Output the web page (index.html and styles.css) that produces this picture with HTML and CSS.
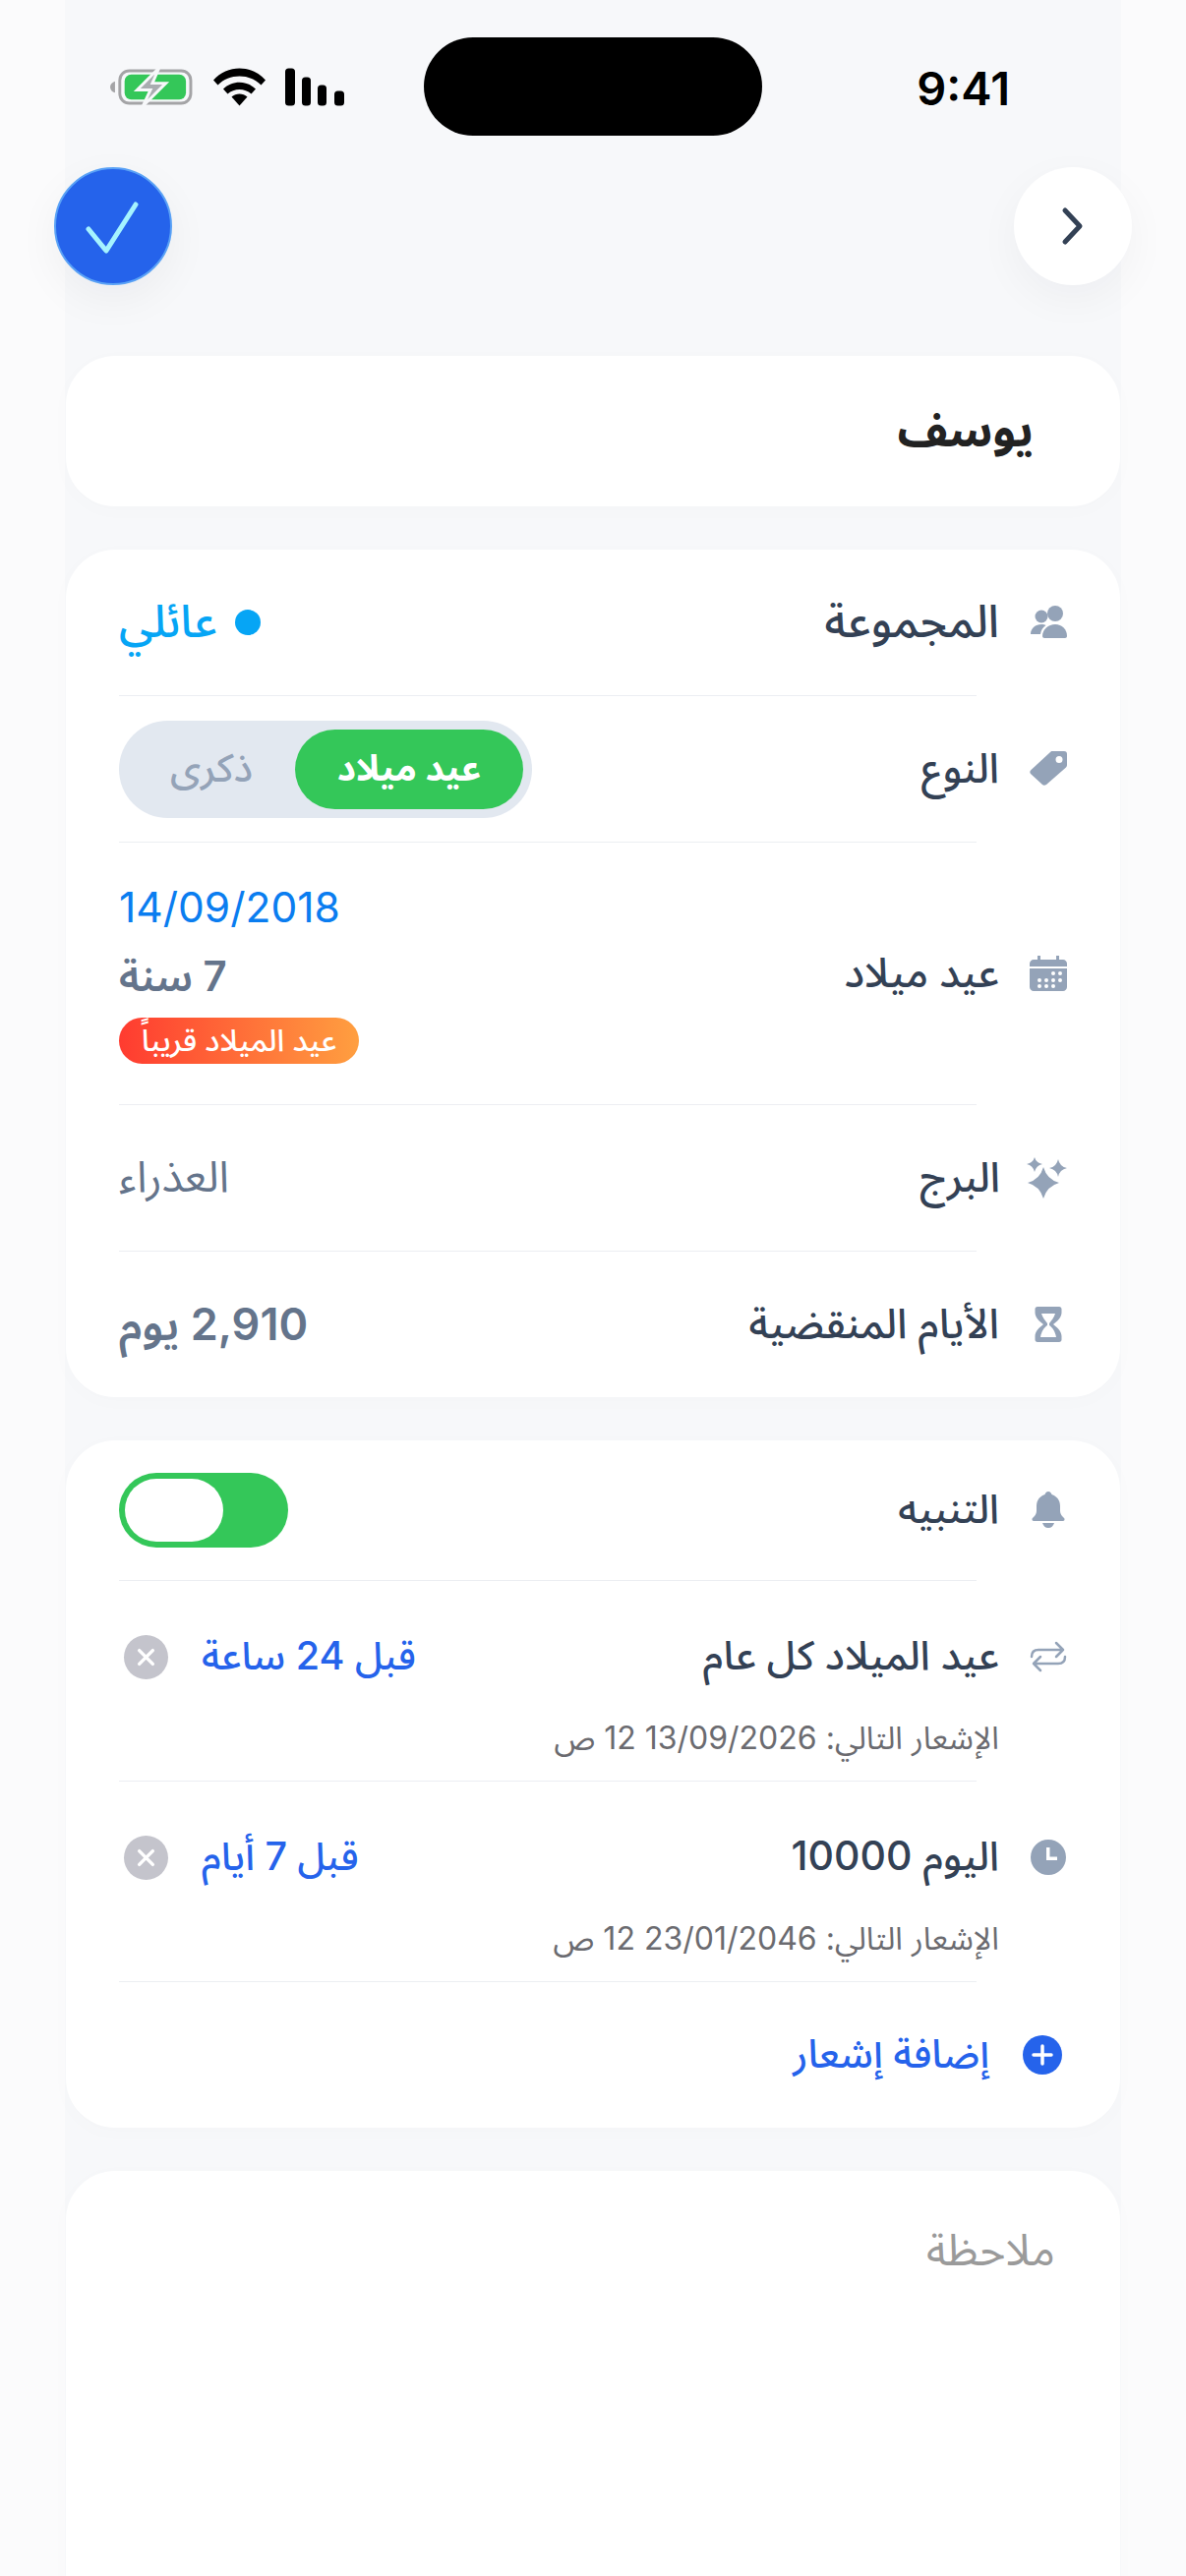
FILE: index.html
```html
<!DOCTYPE html>
<html lang="ar" dir="rtl">
<head>
<meta charset="utf-8">
<title>يوسف</title>
<link rel="stylesheet" href="styles.css">
</head>
<body>
<main class="panel">
  <div class="status">
    <span class="time">9:41</span>
    <div class="status-icons">
      <svg class="ic-signal" viewBox="0 0 60 38"><rect x="0" y="0" width="10" height="38" rx="3.500"/><rect x="17" y="9" width="9" height="29" rx="3.500"/><rect x="33" y="17" width="9" height="21" rx="3.500"/><rect x="50" y="23" width="10" height="15" rx="3.500"/></svg>
      <svg class="ic-wifi" viewBox="0 0 53 38"><path d="M0 12C14-4 39-4 53 12l-4.500 5C37 5 16 5 4.500 17z"/><path d="M10 21c9-9 24-9 33 0l-4.500 5c-6.500-6-17.500-6-24 0z"/><path d="M18.500 29c4.500-4 11.500-4 16 0L26.500 38z"/></svg>
      <svg class="ic-batt" viewBox="0 0 87 40"><path d="M6 14v12c-3-1-5-3-5-6s2-5 5-6z" fill="#a4a4a6"/><rect x="11" y="3" width="74" height="34" rx="10" fill="none" stroke="#a4a4a6" stroke-width="3"/><rect x="16" y="7" width="64" height="26" rx="7" fill="#34c759"/><path d="M52 0L29 23h14l-8 17 24-24H45z" fill="#a9acb0" stroke="#f7f8fa" stroke-width="3"/></svg>
    </div>
    <span class="island"></span>
  </div>

  <header class="topbar">
    <button class="round round-white" type="button" aria-label="رجوع">
      <svg viewBox="0 0 24 40" class="chev"><path d="M4 4l15 16L4 36"/></svg>
    </button>
    <button class="round round-blue" type="button" aria-label="حفظ">
      <svg viewBox="0 0 60 60" class="check"><path d="M5 33l18 22L53 8"/></svg>
    </button>
  </header>

  <section class="card card-name"><h1 class="name">يوسف</h1></section>

  <section class="card">
    <div class="row">
      <div class="key">
        <svg class="icon" viewBox="0 0 38 38"><circle cx="12" cy="13" r="6.500"/><circle cx="26" cy="10" r="8"/><path d="M1 31c0-6 5-10 11-10 2 0 3 .3 4.500 1-3 2-5 5-5.500 9z"/><path d="M13 33c0-7 6-12 13-12s12 5 12 12c0 1-1 2-2 2H15c-1 0-2-1-2-2z"/></svg>
        <span class="label label-lg">المجموعة</span>
      </div>
      <div class="group"><span class="dot"></span><span class="group-name">عائلي</span></div>
    </div>
    <div class="sep"></div>
    <div class="row">
      <div class="key">
        <svg class="icon" viewBox="0 0 38 38"><path fill-rule="evenodd" d="M23 1h12c2 0 3 1 3 3v11c0 1-.5 2-1 2.500L17 35c-1.500 1-3 1-4 0L1 24c-1-1-1-3 .5-4L21 2c.5-.5 1-1 2-1zm7 5a3.500 3.500 0 100 7 3.500 3.500 0 000-7z"/></svg>
        <span class="label">النوع</span>
      </div>
      <div class="segment">
        <span class="seg-on">عيد ميلاد</span>
        <span class="seg-off">ذكرى</span>
      </div>
    </div>
    <div class="sep"></div>
    <div class="row row-birth">
      <div class="key">
        <svg class="icon" viewBox="0 0 38 38"><path d="M8 1h3v4h16V1h3v4h4c2 0 4 2 4 4v3H0V9c0-2 2-4 4-4h4z"/><path fill-rule="evenodd" d="M0 14h38v19c0 2-2 4-4 4H4c-2 0-4-2-4-4zm24 3a2 2 0 100 4 2 2 0 000-4zm7 0a2 2 0 100 4 2 2 0 000-4zm-21 7a2 2 0 100 4 2 2 0 000-4zm7 0a2 2 0 100 4 2 2 0 000-4zm7 0a2 2 0 100 4 2 2 0 000-4zm7 0a2 2 0 100 4 2 2 0 000-4zm-21 6a2 2 0 100 4 2 2 0 000-4zm7 0a2 2 0 100 4 2 2 0 000-4zm7 0a2 2 0 100 4 2 2 0 000-4z"/></svg>
        <span class="label">عيد ميلاد</span>
      </div>
      <div class="birth">
        <span class="date">14/09/2018</span>
        <span class="value-strong">7 سنة</span>
        <span class="badge">عيد الميلاد قريباً</span>
      </div>
    </div>
    <div class="sep"></div>
    <div class="row">
      <div class="key">
        <svg class="icon icon-wide" viewBox="0 0 42 42"><path d="M17 10Q20.500 22.500 33 26 20.500 29.500 17 42 13.500 29.500 1 26 13.500 22.500 17 10z"/><path d="M8 0Q9.500 5.500 16 7 9.500 8.500 8 15 6.500 8.500 0 7 6.500 5.500 8 0z"/><path d="M32 2Q33.500 9.500 41 11 33.500 12.500 32 20 30.500 12.500 23 11 30.500 9.500 32 2z"/></svg>
        <span class="label">البرج</span>
      </div>
      <span class="value-soft">العذراء</span>
    </div>
    <div class="sep"></div>
    <div class="row">
      <div class="key">
        <svg class="icon" viewBox="0 0 38 38"><path fill-rule="evenodd" d="M8 1h22c1.500 0 2.500 1 2.500 2.500V7c0 5-4.500 9-8.500 12 4 3 8.500 7 8.500 12v3.500c0 1.500-1 2.500-2.500 2.500H8c-1.500 0-2.500-1-2.500-2.500V31c0-5 4.500-9 8.500-12-4-3-8.500-7-8.500-12V3.500C5.500 2 6.500 1 8 1zm4 7c1 4 4 7 6 10v2c-3 2-6 6-7 12h16c-1-6-4-10-7-12v-2c2-3 5-6 6-10z"/></svg>
        <span class="label">الأيام المنقضية</span>
      </div>
      <span class="value-days">2,910 يوم</span>
    </div>
  </section>

  <section class="card">
    <div class="row row-alert">
      <div class="key">
        <svg class="icon" viewBox="0 0 38 38"><path d="M19 0c2 0 3 1.500 3.500 3C28 5 31 9 31 15v5c0 3 2 5 4 7 1 1 .5 3-1 3H4c-1.500 0-2-2-1-3 2-2 4-4 4-7v-5C7 9 10 5 15.500 3 16 1.500 17 0 19 0z"/><path d="M13 32h12c-1 3-3 5-6 5s-5-2-6-5z"/></svg>
        <span class="label label-sm">التنبيه</span>
      </div>
      <span class="switch"><span class="knob"></span></span>
    </div>
    <div class="sep"></div>
    <div class="reminder">
      <div class="row-main">
        <div class="key">
          <svg class="icon icon-line" viewBox="0 0 38 38"><path d="M2 19c0-5 3-7 7-7h25M27 5l7 7-7 7"/><path d="M36 19c0 5-3 7-7 7H4M11 33l-7-7 7-7"/></svg>
          <span class="label label-sm">عيد الميلاد كل عام</span>
        </div>
        <div class="lead">
          <span class="lead-text">قبل 24 ساعة</span>
          <span class="remove"><svg viewBox="0 0 46 46"><path d="M16 16l14 14M30 16L16 30"/></svg></span>
        </div>
      </div>
      <p class="next">الإشعار التالي: 13/09/2026 12 ص</p>
    </div>
    <div class="sep"></div>
    <div class="reminder">
      <div class="row-main">
        <div class="key">
          <svg class="icon" viewBox="0 0 38 38"><path fill-rule="evenodd" d="M19 1a18 18 0 110 36 18 18 0 010-36zm-2 8v13h11v-3.500h-7.500V9z"/></svg>
          <span class="label label-sm">اليوم 10000</span>
        </div>
        <div class="lead">
          <span class="lead-text">قبل 7 أيام</span>
          <span class="remove"><svg viewBox="0 0 46 46"><path d="M16 16l14 14M30 16L16 30"/></svg></span>
        </div>
      </div>
      <p class="next">الإشعار التالي: 23/01/2046 12 ص</p>
    </div>
    <div class="sep"></div>
    <div class="add">
      <span class="plus"><svg viewBox="0 0 40 40"><path d="M20 11v18M11 20h18"/></svg></span>
      <span class="add-text">إضافة إشعار</span>
    </div>
  </section>

  <section class="card card-note"><p class="note">ملاحظة</p></section>
</main>
</body>
</html>
```
FILE: styles.css
```css
* { box-sizing: border-box; }
html, body { margin: 0; height: 100%; }
body {
  width: 1206px;
  height: 2620px;
  overflow: hidden;
  background: #fbfbfc;
  font-family: Inter, "Noto Sans Arabic", "Noto Sans", "DejaVu Sans", sans-serif;
  color: #334155;
}
.panel {
  width: 1074px;
  height: 2620px;
  margin: 0 66px;
  background: #f7f8fa;
}

.status {
  display: flex;
  align-items: center;
  justify-content: space-between;
  height: 170px;
  padding: 0 113px 0 44px;
  position: relative;
}
.time {
  margin-top: 10px;
  font-size: 47px;
  line-height: 56px;
  font-weight: 600;
  color: #000;
  direction: ltr;
}
.island {
  position: absolute;
  left: 365px;
  top: 38px;
  width: 344px;
  height: 100px;
  background: #000;
  border-radius: 50px;
}
.status-icons {
  display: flex;
  align-items: center;
  gap: 20px;
  margin-top: 6px;
}
.status-icons svg { display: block; height: 39px; }
.ic-batt { width: 87px; }
.ic-wifi { width: 53px; }
.ic-signal { width: 60px; }

.topbar {
  display: flex;
  justify-content: space-between;
  height: 120px;
  margin: 0 -11px 72px -11px;
}
.round {
  width: 120px;
  height: 120px;
  border: 0;
  padding: 0;
  border-radius: 50%;
  display: flex;
  align-items: center;
  justify-content: center;
}
.round-white { background: #fff; box-shadow: 0 14px 44px rgba(15, 23, 42, .045); }
.round-blue {
  background: #2563eb;
  border: 2px solid #5aa2f6;
  box-shadow: 0 14px 44px rgba(15, 23, 42, .05);
}
.chev { width: 24px; height: 40px; fill: none; stroke: #334155; stroke-width: 5; stroke-linecap: round; stroke-linejoin: round; }
.check { width: 60px; height: 60px; fill: none; stroke: #a5f3ff; stroke-width: 5; stroke-linecap: round; stroke-linejoin: round; }

.card {
  background: #fff;
  border-radius: 50px;
  padding: 0 54px;
  margin-bottom: 44px;
  margin-right: 1px;
  width: 1072px;
  box-shadow: 0 4px 24px rgba(15, 23, 42, .014);
}
.card-name { height: 153px; display: flex; align-items: center; padding: 0 88px; }
.name { margin: 0; font-size: 47px; font-weight: 700; color: #222; }

.row {
  display: flex;
  align-items: center;
  justify-content: space-between;
  height: 148px;
}
.key { display: flex; align-items: center; gap: 31px; }
.icon { width: 38px; height: 38px; fill: #94a3b8; flex: none; display: block; }
.icon-wide { width: 42px; height: 42px; margin-left: -4px; margin-right: -1px; }
.icon-line { fill: none; stroke: #94a3b8; stroke-width: 2.500; stroke-linecap: round; stroke-linejoin: round; }
.label { font-size: 42px; font-weight: 500; color: #334155; }
.label-lg { font-size: 46px; }
.label-sm { font-size: 41px; }
.sep { height: 1px; background: #eceef2; margin-right: 92px; }

.group { display: flex; align-items: center; gap: 18px; }
.dot { width: 26px; height: 26px; border-radius: 50%; background: #06a5f5; }
.group-name { font-size: 46px; font-weight: 500; color: #06a5f5; }

.segment {
  display: flex;
  align-items: center;
  width: 420px;
  height: 99px;
  padding: 0 9px;
  border-radius: 50px;
  background: #e2e8f0;
}
.seg-on {
  width: 232px;
  height: 81px;
  border-radius: 41px;
  background: #34c759;
  color: #fff;
  font-size: 37px;
  font-weight: 700;
  display: flex;
  align-items: center;
  justify-content: center;
}
.seg-off {
  flex: 1;
  text-align: center;
  font-size: 40px;
  font-weight: 500;
  color: #94a3b8;
}

.row-birth { height: 266px; }
.birth { display: flex; flex-direction: column; align-items: flex-end; align-self: flex-start; padding-top: 36px; }
.date { font-size: 42.500px; line-height: 60px; color: #0a7df0; direction: ltr; }
.value-strong {
  align-self: flex-end;
  font-size: 42px;
  line-height: 60px;
  margin-top: 10px;
  font-weight: 600;
  color: #64748b;
}
.badge {
  margin-top: 12px;
  width: 244px;
  height: 47px;
  display: flex;
  align-items: center;
  justify-content: center;
  border-radius: 24px;
  font-size: 31px;
  font-weight: 500;
  color: #fff;
  background: linear-gradient(to left, #ff9f40, #ff3b30);
}
.value-soft { font-size: 44px; color: #64748b; }
.value-days { padding-top: 3px; font-size: 45px; font-weight: 600; color: #64748b; }

.row-alert { height: 142px; }
.switch {
  display: block;
  direction: ltr;
  width: 172px;
  height: 76px;
  padding: 6px;
  border-radius: 38px;
  background: #34c759;
}
.knob { display: block; width: 100px; height: 64px; border-radius: 32px; background: #fff; }

.reminder { height: 203px; padding-top: 44px; }
.row-main { display: flex; align-items: center; justify-content: space-between; height: 66px; }
.lead { display: flex; align-items: center; gap: 34px; padding-left: 5px; }
.lead-text { font-size: 39.500px; font-weight: 500; color: #2563eb; }
.remove {
  display: block;
  width: 45px;
  height: 45px;
  border-radius: 50%;
  background: #c4c4cc;
}
.remove svg { display: block; width: 45px; height: 45px; fill: none; stroke: #fff; stroke-width: 3.500; stroke-linecap: round; }
.next { margin: 30px 69px 0 0; font-size: 32px; line-height: 40px; color: #6b6b70; }

.add { display: flex; align-items: center; gap: 34px; height: 148px; padding-right: 5px; }
.plus { display: block; width: 40px; height: 40px; border-radius: 50%; background: #2563eb; }
.plus svg { display: block; width: 40px; height: 40px; fill: none; stroke: #fff; stroke-width: 3.500; stroke-linecap: round; }
.add-text { font-size: 40px; font-weight: 500; color: #2563eb; }

.card-note { height: 500px; margin-bottom: 0; padding: 55px 66px; }
.note { margin: 0; font-size: 45px; line-height: 50px; color: #9a9a9a; }
```
